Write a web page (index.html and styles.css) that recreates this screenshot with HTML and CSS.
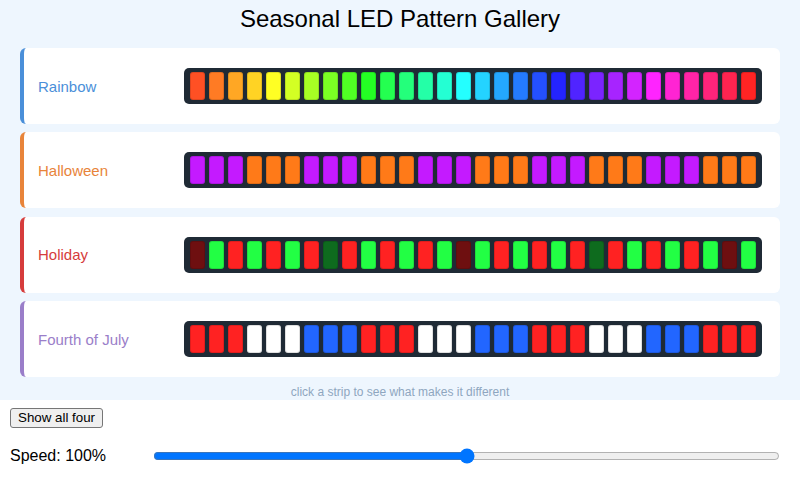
FILE: index.html
```html
<!doctype html>
<html lang="en">
<head>
    <meta charset="UTF-8">
    <meta name="viewport" content="width=device-width, initial-scale=1.0">
    <title>Seasonal LED Pattern Gallery</title>
    <link rel="stylesheet" href="styles.css">
</head>
<body>
    <section class="gallery">
        <h1>Seasonal LED Pattern Gallery</h1>

        <div class="strips">
            <div class="pattern pattern--rainbow">
                <p class="pattern__name">Rainbow</p>
                <div class="strip" data-pattern="rainbow"></div>
            </div>
            <div class="pattern pattern--halloween">
                <p class="pattern__name">Halloween</p>
                <div class="strip" data-pattern="halloween"></div>
            </div>
            <div class="pattern pattern--holiday">
                <p class="pattern__name">Holiday</p>
                <div class="strip" data-pattern="holiday"></div>
            </div>
            <div class="pattern pattern--july">
                <p class="pattern__name">Fourth of July</p>
                <div class="strip" data-pattern="july"></div>
            </div>
        </div>

        <p class="hint">click a strip to see what makes it different</p>
    </section>

    <div class="controls">
        <button type="button" class="show-all-js">Show all four</button>
        <div class="speed">
            <label for="speed" class="speed__label">Speed: <span class="speed-value-js">100</span>%</label>
            <input type="range" id="speed" class="speed-js" min="0" max="200" value="100">
        </div>
    </div>

    <script>
        const LED_COUNT = 30

        const RED = "#ff2222"
        const GREEN = "#22ff44"
        const WHITE = "#ffffff"
        const BLUE = "#2266ff"
        const PURPLE = "#c41aff"
        const ORANGE = "#ff7a18"

        const patterns = {
            rainbow: i => `hsl(${(i + 1) * 12}, 100%, 57%)`,
            halloween: i => (Math.floor(i / 3) % 2 === 0 ? PURPLE : ORANGE),
            holiday: i => {
                // every 7th bulb is dimmed
                if (i % 7 === 0) return i % 2 === 0 ? "#6e0f10" : "#0e6b1e"
                return i % 2 === 0 ? RED : GREEN
            },
            july: i => [RED, WHITE, BLUE][Math.floor(i / 3) % 3]
        }

        document.querySelectorAll('.strip').forEach(strip => {
            const colorOf = patterns[strip.dataset.pattern]
            for (let i = 0; i < LED_COUNT; i++) {
                const led = document.createElement('span')
                led.className = 'strip__led'
                led.style.backgroundColor = colorOf(i)
                strip.appendChild(led)
            }
        })

        const speedInput = document.querySelector('.speed-js')
        const speedValue = document.querySelector('.speed-value-js')

        speedInput.addEventListener('input', () => {
            speedValue.textContent = speedInput.value
        })
    </script>
</body>
</html>
```

FILE: styles.css
```css
body {
    margin: 0;
    font-family: "Liberation Sans", Arial, sans-serif;
    color: #000;
    background-color: #fff;
}

.gallery {
    background-color: #eef6fe;
    padding: 5px 20px 1px 20px;
}

.gallery h1 {
    margin: 0 0 15px 0;
    font-size: 24px;
    line-height: 28px;
    font-weight: normal;
    text-align: center;
}

.strips {
    display: flex;
    flex-direction: column;
    gap: 8.4px;
}

.pattern {
    display: flex;
    align-items: center;
    height: 76px;
    padding: 0 18px 0 14px;
    background-color: #fff;
    border-left: 4px solid;
    border-radius: 6px;
    cursor: pointer;
}

.pattern--rainbow {
    border-color: #4a8fd9;
    color: #4a8fd9;
}

.pattern--halloween {
    border-color: #e8843a;
    color: #e8843a;
}

.pattern--holiday {
    border-color: #d63c3c;
    color: #d63c3c;
}

.pattern--july {
    border-color: #9a7ec9;
    color: #9a7ec9;
}

.pattern__name {
    width: 146px;
    flex-shrink: 0;
    margin: 0;
    font-size: 15px;
}

.strip {
    flex: 1;
    display: flex;
    gap: 4px;
    height: 28px;
    padding: 4px 6px;
    background-color: #1f2a35;
    border-radius: 5px;
}

.strip__led {
    flex: 1;
    border-radius: 3px;
    box-shadow: inset 0 0 0 1px rgba(0, 0, 0, 0.12);
}

.hint {
    margin: 8px 0 0 0;
    font-size: 12px;
    line-height: 14px;
    color: #8ea6c0;
    text-align: center;
}

.controls {
    padding: 8px 18px 0 10px;
}

.controls button {
    font-family: "Liberation Sans", Arial, sans-serif;
    font-size: 13.33px;
    line-height: 16px;
    padding: 1px 7px;
    color: #000;
    background-color: #efefef;
    border: 1px solid #767676;
    border-radius: 3px;
}

.speed {
    display: flex;
    align-items: center;
    margin-top: 18px;
}

.speed__label {
    width: 141px;
    flex-shrink: 0;
    font-size: 16px;
}

.speed input {
    flex: 1;
}
```
